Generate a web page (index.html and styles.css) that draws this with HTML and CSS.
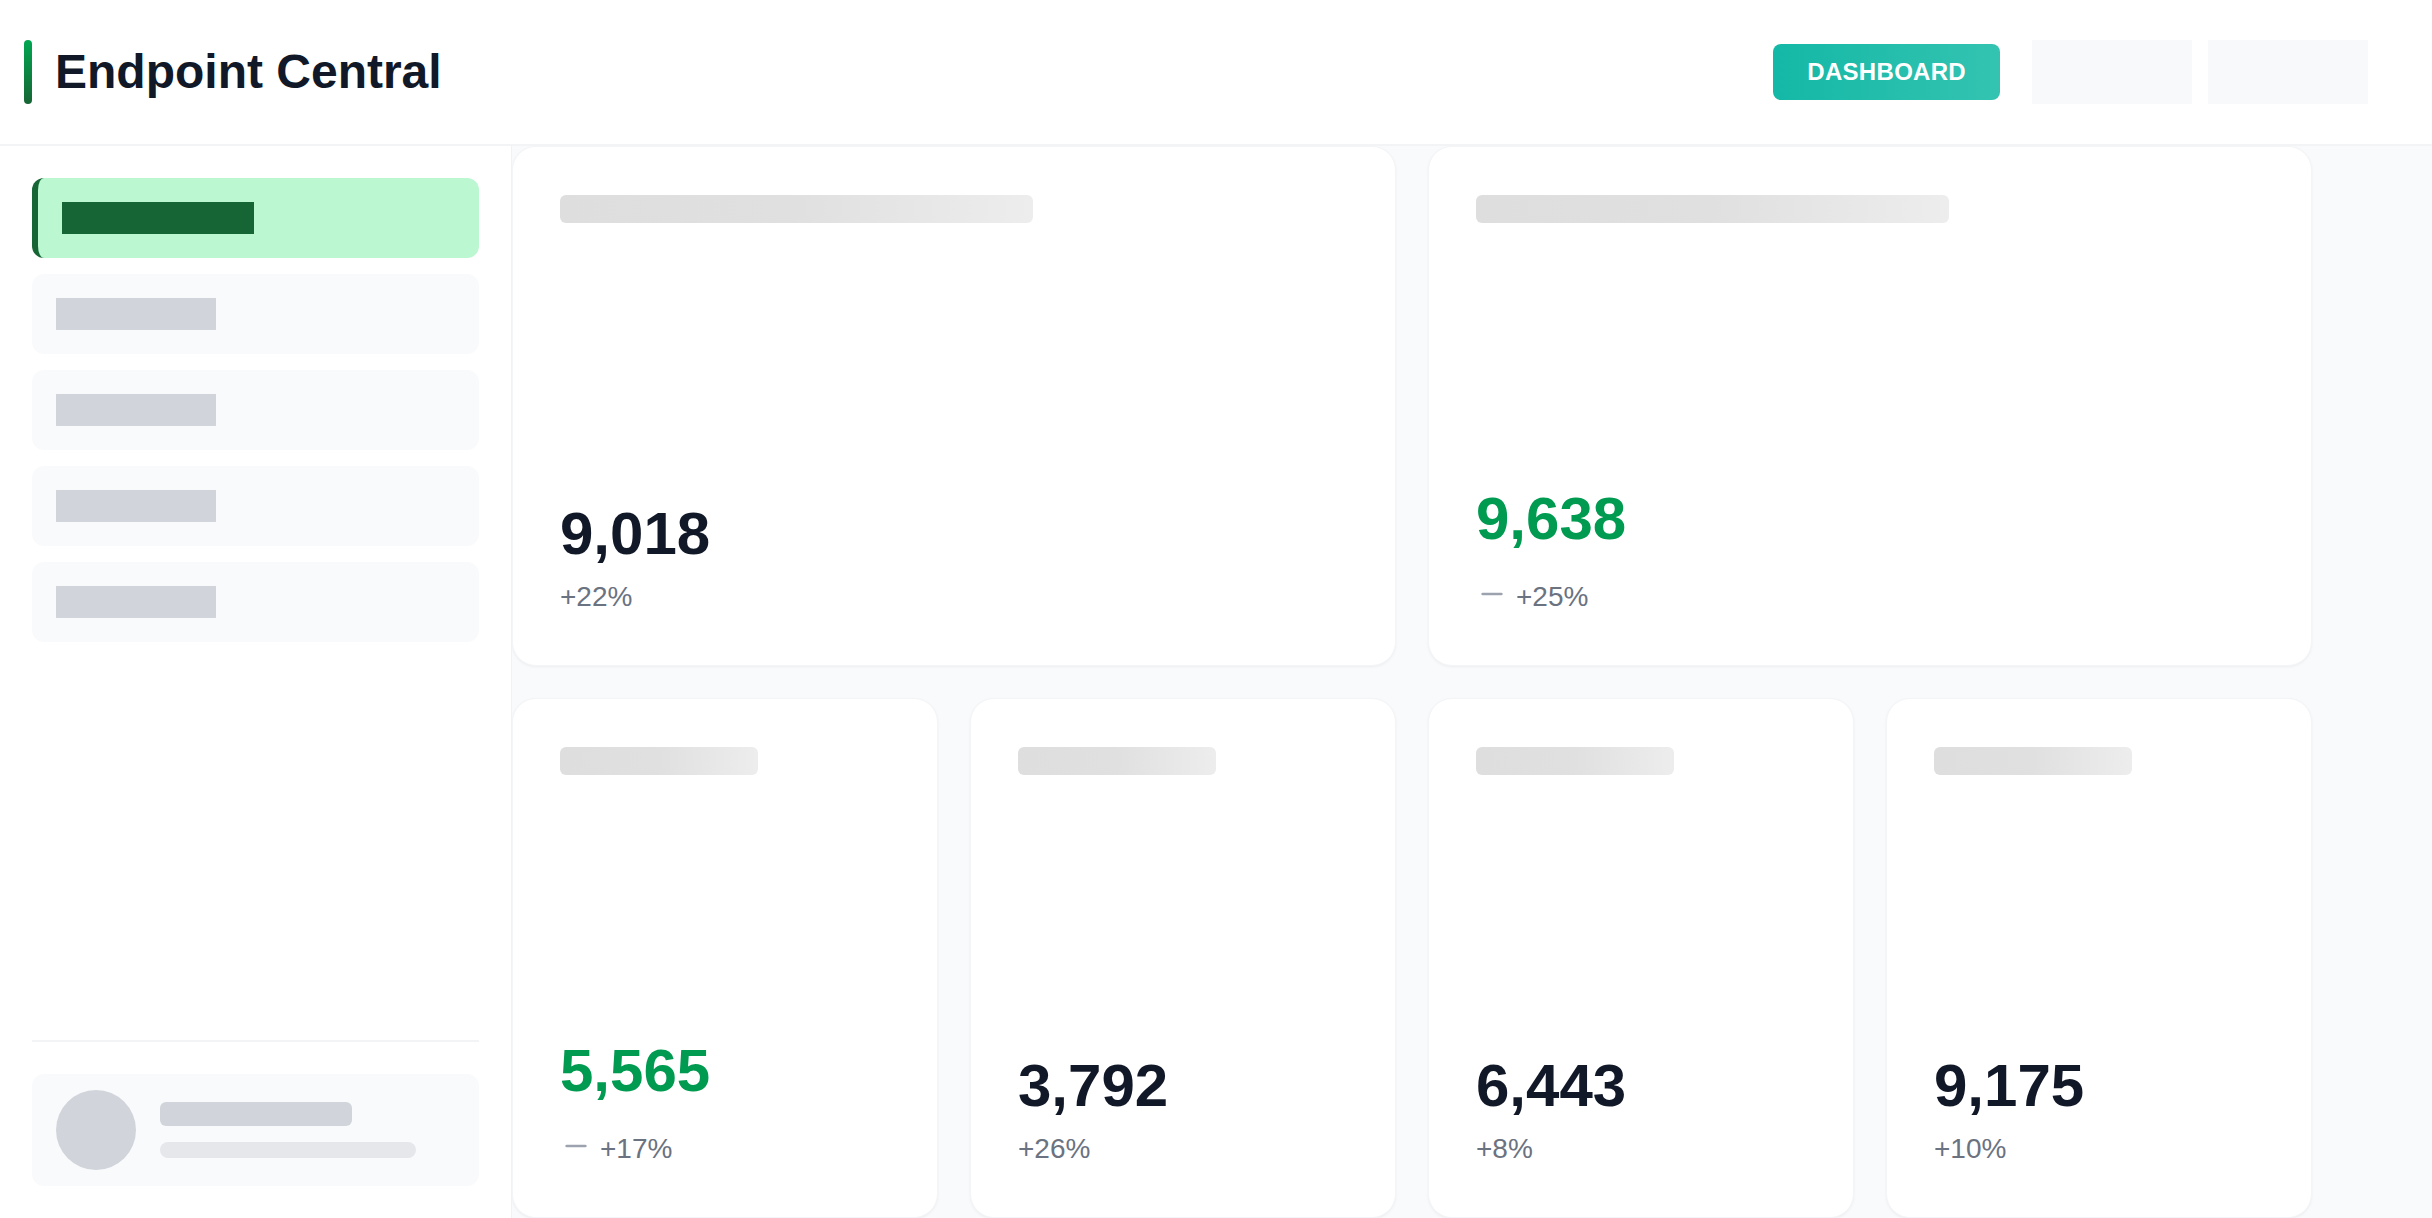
FILE: index.html
```html
<!DOCTYPE html>
<html lang="en">
<head>
    <meta charset="UTF-8">
    <meta name="viewport" content="width=device-width, initial-scale=1.0">
    <title>Endpoint Central</title>
    <link rel="stylesheet" href="styles.css">
</head>
<body>
    <header class="topbar">
        <div class="brand">
            <span class="brand-mark"></span>
            <h1>Endpoint Central</h1>
        </div>
        <div class="topbar-actions">
            <button class="btn-primary">DASHBOARD</button>
            <div class="placeholder-box"></div>
            <div class="placeholder-box"></div>
        </div>
    </header>

    <div class="layout">
        <aside class="sidebar">
            <nav class="nav">
                <div class="nav-item active"><span class="nav-bar"></span></div>
                <div class="nav-item"><span class="nav-bar"></span></div>
                <div class="nav-item"><span class="nav-bar"></span></div>
                <div class="nav-item"><span class="nav-bar"></span></div>
                <div class="nav-item"><span class="nav-bar"></span></div>
            </nav>

            <div class="sidebar-footer">
                <div class="user-card">
                    <div class="avatar"></div>
                    <div class="user-lines">
                        <span class="line-name"></span>
                        <span class="line-role"></span>
                    </div>
                </div>
            </div>
        </aside>

        <main class="main">
            <div class="card-grid">
                <div class="card wide">
                    <div class="skeleton-title"></div>
                    <div class="stat">
                        <div class="stat-value">9,018</div>
                        <div class="stat-trend">+22%</div>
                    </div>
                </div>
                <div class="card wide">
                    <div class="skeleton-title"></div>
                    <div class="stat">
                        <div class="stat-value positive">9,638</div>
                        <div class="stat-trend with-icon">
                            <svg viewBox="0 0 24 24" width="32" height="32"><path d="M5 12h14" /></svg>
                            <span>+25%</span>
                        </div>
                    </div>
                </div>
                <div class="card">
                    <div class="skeleton-title"></div>
                    <div class="stat">
                        <div class="stat-value positive">5,565</div>
                        <div class="stat-trend with-icon">
                            <svg viewBox="0 0 24 24" width="32" height="32"><path d="M5 12h14" /></svg>
                            <span>+17%</span>
                        </div>
                    </div>
                </div>
                <div class="card">
                    <div class="skeleton-title"></div>
                    <div class="stat">
                        <div class="stat-value">3,792</div>
                        <div class="stat-trend">+26%</div>
                    </div>
                </div>
                <div class="card">
                    <div class="skeleton-title"></div>
                    <div class="stat">
                        <div class="stat-value">6,443</div>
                        <div class="stat-trend">+8%</div>
                    </div>
                </div>
                <div class="card">
                    <div class="skeleton-title"></div>
                    <div class="stat">
                        <div class="stat-value">9,175</div>
                        <div class="stat-trend">+10%</div>
                    </div>
                </div>
            </div>
        </main>
    </div>
</body>
</html>
```

FILE: styles.css
```css
* {
    box-sizing: border-box;
}
body {
    font-family: "Liberation Sans", Arial, sans-serif;
    line-height: 1.5;
    margin: 0;
    height: 100vh;
    overflow: hidden;
    background-color: #f9fafb;
    color: #111827;
    display: flex;
    flex-direction: column;
}

/* Top bar */
.topbar {
    height: 146px;
    flex-shrink: 0;
    display: flex;
    align-items: center;
    justify-content: space-between;
    padding: 0 64px 0 24px;
    background: white;
    border-bottom: 2px solid #f3f4f6;
}
.brand {
    display: flex;
    align-items: center;
    gap: 23px;
}
.brand-mark {
    width: 8px;
    height: 64px;
    border-radius: 4px;
    background: linear-gradient(180deg, #00a651, #166534);
}
.brand h1 {
    margin: 0;
    font-size: 48px;
    font-weight: 700;
    line-height: 1.2;
    color: #111827;
}
.topbar-actions {
    display: flex;
    align-items: center;
    gap: 16px;
}
.btn-primary {
    height: 56px;
    padding: 0 34px;
    margin-right: 16px;
    border: none;
    border-radius: 8px;
    background: linear-gradient(90deg, #14b8a6, #34c3b1);
    color: white;
    font-family: inherit;
    font-size: 24px;
    font-weight: 700;
    letter-spacing: 0.3px;
    cursor: pointer;
}
.placeholder-box {
    width: 160px;
    height: 64px;
    background: #f8f9fb;
}

/* Layout */
.layout {
    flex: 1;
    display: flex;
    min-height: 0;
}
.sidebar {
    width: 512px;
    flex-shrink: 0;
    display: flex;
    flex-direction: column;
    padding: 32px;
    background: white;
    border-right: 1px solid #f1f2f4;
}
.nav {
    display: flex;
    flex-direction: column;
    gap: 16px;
}
.nav-item {
    height: 80px;
    display: flex;
    align-items: center;
    padding: 0 24px;
    border-radius: 12px;
    background: #f9fafb;
}
.nav-bar {
    width: 160px;
    height: 32px;
    background: #d1d5db;
}
.nav-item.active {
    background: #bbf7d0;
    border-left: 6px solid #166534;
}
.nav-item.active .nav-bar {
    width: 192px;
    background: #166534;
}
.sidebar-footer {
    margin-top: auto;
    padding-top: 32px;
    border-top: 2px solid #f3f4f6;
}
.user-card {
    display: flex;
    align-items: center;
    gap: 24px;
    padding: 16px 24px;
    border-radius: 12px;
    background: #f9fafb;
}
.avatar {
    width: 80px;
    height: 80px;
    border-radius: 50%;
    background: #d1d5db;
}
.user-lines {
    display: flex;
    flex-direction: column;
    gap: 16px;
}
.line-name {
    width: 192px;
    height: 24px;
    border-radius: 6px;
    background: #d1d5db;
}
.line-role {
    width: 256px;
    height: 16px;
    border-radius: 8px;
    background: #e5e7eb;
}

/* Main */
.main {
    flex: 1;
    overflow: hidden;
    background: #f9fafb;
}
.card-grid {
    display: grid;
    grid-template-columns: repeat(4, 426px);
    grid-auto-rows: 520px;
    gap: 32px;
}
.card {
    display: flex;
    flex-direction: column;
    justify-content: space-between;
    padding: 48px 47px 47px;
    background: white;
    border: 1px solid #f4f5f7;
    border-radius: 24px;
    box-shadow: 0 1px 3px rgba(0,0,0,0.05);
}
.card.wide {
    grid-column: span 2;
}
.skeleton-title {
    width: 60%;
    height: 28px;
    border-radius: 6px;
    background: linear-gradient(90deg, #dedede 0%, #e0e0e0 50%, #ededed 100%);
}
.stat {
    display: flex;
    flex-direction: column;
}
.stat-value {
    font-size: 60px;
    font-weight: 700;
    line-height: 1.2;
    margin-bottom: 6px;
    color: #111827;
}
.stat-value.positive {
    color: #009a50;
}
.stat-trend {
    font-size: 28px;
    color: #6b7280;
}
.stat-trend.with-icon {
    display: flex;
    align-items: flex-start;
    gap: 8px;
    margin-top: 15px;
}
.stat-trend svg {
    margin-top: 2px;
    fill: none;
    stroke: #9ca3af;
    stroke-width: 2;
    stroke-linecap: round;
}
```
